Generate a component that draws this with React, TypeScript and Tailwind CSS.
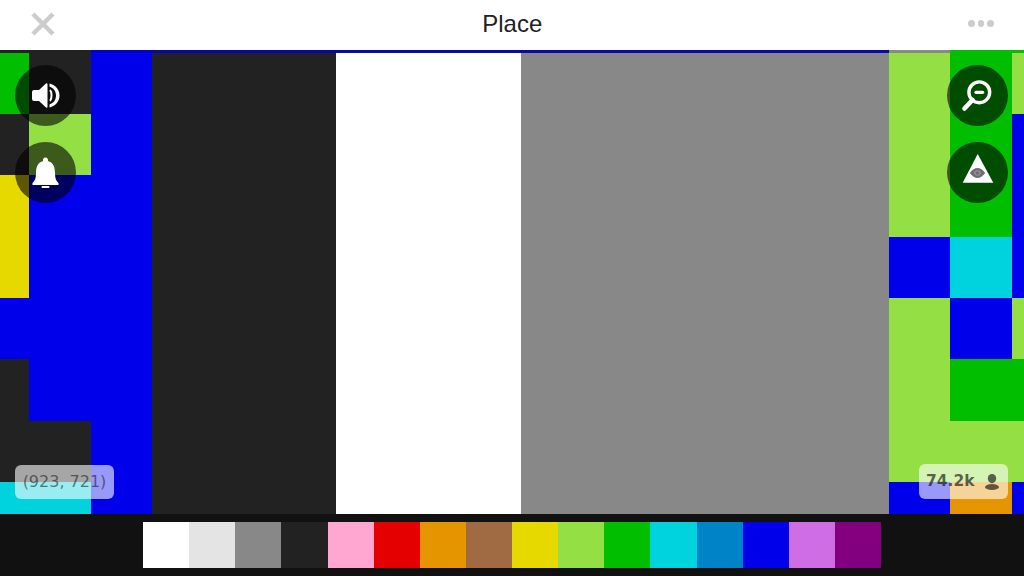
const columns = [
  {
    width: "w-[29px]",
    cells: [
      "h-[3px] bg-[#222222]",
      "h-[61px] bg-[#02be01]",
      "h-[61px] bg-[#222222]",
      "h-[123px] bg-[#e5d900]",
      "h-[61px] bg-[#0000ea]",
      "h-[123px] bg-[#222222]",
      "h-[32px] bg-[#00d3dd]",
    ],
  },
  {
    width: "w-[62px]",
    cells: [
      "h-[3px] bg-[#222222]",
      "h-[61px] bg-[#222222]",
      "h-[61px] bg-[#94e044]",
      "h-[246px] bg-[#0000ea]",
      "h-[61px] bg-[#222222]",
      "h-[32px] bg-[#00d3dd]",
    ],
  },
  { width: "w-[61px]", cells: ["h-[3px] bg-[#0000c0]", "h-[461px] bg-[#0000ea]"] },
  { width: "w-[184px]", cells: ["h-[3px] bg-[#0808a8]", "h-[461px] bg-[#222222]"] },
  { width: "w-[185px]", cells: ["h-[3px] bg-[#0808a8]", "h-[461px] bg-white"] },
  { width: "w-[368px]", cells: ["h-[3px] bg-[#0808a8]", "h-[461px] bg-[#888888]"] },
  {
    width: "w-[61px]",
    cells: [
      "h-[3px] bg-[#888888]",
      "h-[184px] bg-[#94e044]",
      "h-[61px] bg-[#0000ea]",
      "h-[184px] bg-[#94e044]",
      "h-[32px] bg-[#0000ea]",
    ],
  },
  {
    width: "w-[62px]",
    cells: [
      "h-[3px] bg-[#02be01]",
      "h-[184px] bg-[#02be01]",
      "h-[61px] bg-[#00d3dd]",
      "h-[61px] bg-[#0000ea]",
      "h-[62px] bg-[#02be01]",
      "h-[61px] bg-[#94e044]",
      "h-[32px] bg-[#e59500]",
    ],
  },
  {
    width: "w-[12px]",
    cells: [
      "h-[3px] bg-[#02be01]",
      "h-[61px] bg-[#94e044]",
      "h-[184px] bg-[#0000ea]",
      "h-[61px] bg-[#94e044]",
      "h-[62px] bg-[#02be01]",
      "h-[61px] bg-[#94e044]",
      "h-[32px] bg-[#0000ea]",
    ],
  },
];

const swatches = [
  "bg-[#ffffff]",
  "bg-[#e4e4e4]",
  "bg-[#888888]",
  "bg-[#222222]",
  "bg-[#ffa7d1]",
  "bg-[#e50000]",
  "bg-[#e59500]",
  "bg-[#a06a42]",
  "bg-[#e5d900]",
  "bg-[#94e044]",
  "bg-[#02be01]",
  "bg-[#00d3dd]",
  "bg-[#0083c7]",
  "bg-[#0000ea]",
  "bg-[#cf6ee4]",
  "bg-[#820080]",
];

function RoundButton({ children }: { children: React.ReactNode }) {
  return (
    <button className="w-[61px] h-[61px] rounded-full bg-black/60">
      <svg viewBox="0 0 61 61" className="w-[61px] h-[61px] block">
        {children}
      </svg>
    </button>
  );
}

export default function App() {
  return (
    <div className="w-[1024px] h-[576px] overflow-hidden flex flex-col bg-[#111111] font-['Liberation_Sans',sans-serif]">
      {/* Header */}
      <header className="h-[50px] shrink-0 bg-white flex items-center justify-between pl-[30px] pr-[30px] pb-[3px]">
        <svg viewBox="0 0 26 26" className="w-[26px] h-[26px]">
          <path d="M3 3 L23 23 M23 3 L3 23" stroke="#cccccc" strokeWidth="4.5" fill="none" />
        </svg>
        <h1 className="text-[24px] leading-none text-[#222222]">Place</h1>
        <div className="flex gap-[3px]">
          <div className="w-[6.5px] h-[6.5px] rounded-full bg-[#cccccc]" />
          <div className="w-[6.5px] h-[6.5px] rounded-full bg-[#cccccc]" />
          <div className="w-[6.5px] h-[6.5px] rounded-full bg-[#cccccc]" />
        </div>
      </header>

      {/* Canvas */}
      <main className="relative h-[464px] shrink-0 flex">
        {columns.map((column, index) => (
          <div key={index} className={`${column.width} shrink-0 flex flex-col`}>
            {column.cells.map((cell, cellIndex) => (
              <div key={cellIndex} className={cell} />
            ))}
          </div>
        ))}

        <div className="absolute left-[15px] top-[15px] flex flex-col gap-[16px]">
          <RoundButton>
            <path
              d="M17 27 q0 -2 2 -2 h5 l7 -6.5 q1.5 -.8 1.5 1 v22 q0 1.8 -1.5 1 l-7 -6.5 h-5 q-2 0 -2 -2z"
              fill="white"
            />
            <path
              d="M34.5 18.5 C41 20 44.5 25 44.5 30.5 C44.5 36 41 41 34.5 42.5 L34.5 39.5 C38.5 38 41 35 41 30.5 C41 26 38.5 23 34.5 21.5 Z"
              fill="white"
            />
            <path d="M35 25 C37 27 37 34 35 36" stroke="white" strokeWidth="2" fill="none" />
          </RoundButton>
          <RoundButton>
            <path
              d="M30.5 15.5 a2.6 2.6 0 0 1 2.4 3.6 C38 20.5 40 25 40 31 C40 36 41 39 43.5 41 V43 H17.5 V41 C20 39 21 36 21 31 C21 25 23 20.5 28.1 19.1 a2.6 2.6 0 0 1 2.4 -3.6 Z"
              fill="white"
            />
            <rect x="26.5" y="44" width="8" height="2" rx="1" fill="white" />
          </RoundButton>
        </div>

        <div className="absolute right-[16px] top-[15px] flex flex-col gap-[16px]">
          <RoundButton>
            <circle cx="32.3" cy="27.3" r="10.4" stroke="white" strokeWidth="3.4" fill="none" />
            <path d="M29 27.3 H35.6" stroke="white" strokeWidth="3.2" strokeLinecap="round" />
            <path d="M25.5 35 L17.5 43.5" stroke="white" strokeWidth="4.6" strokeLinecap="round" />
          </RoundButton>
          <RoundButton>
            <path d="M30.7 12 L46.3 40.7 H15.7 Z" fill="white" />
            <path d="M22.8 31 Q30.5 21 38.2 31 Q30.5 41 22.8 31 Z" fill="#6f6c72" />
            <ellipse cx="30.5" cy="31" rx="3.4" ry="2.8" fill="#8f8c92" />
            <circle cx="30.5" cy="31" r="1.6" fill="#6f6c72" />
          </RoundButton>
        </div>

        <div className="absolute left-[15px] bottom-[15px] w-[99px] h-[34px] rounded-[6px] bg-white/60 flex items-center justify-center font-['DejaVu_Sans',sans-serif] text-[16px] text-black/50">
          (923, 721)
        </div>

        <div className="absolute right-[16px] bottom-[15px] w-[89px] h-[35px] rounded-[6px] bg-white/60 flex items-center justify-between pl-[7px] pr-[9px] font-['DejaVu_Sans',sans-serif] font-bold text-[15.5px] text-black/60">
          74.2k
          <svg viewBox="0 0 14 16" className="w-[14px] h-[16px]">
            <ellipse cx="7" cy="4.6" rx="4.2" ry="4.6" fill="#000000" fillOpacity="0.6" />
            <ellipse cx="7" cy="13" rx="7" ry="3" fill="#000000" fillOpacity="0.6" />
          </svg>
        </div>
      </main>

      {/* Palette */}
      <footer className="h-[62px] shrink-0 flex justify-center pt-[8px]">
        {swatches.map((swatch) => (
          <div key={swatch} className={`${swatch} w-[46.125px] h-[46px]`} />
        ))}
      </footer>
    </div>
  );
}
